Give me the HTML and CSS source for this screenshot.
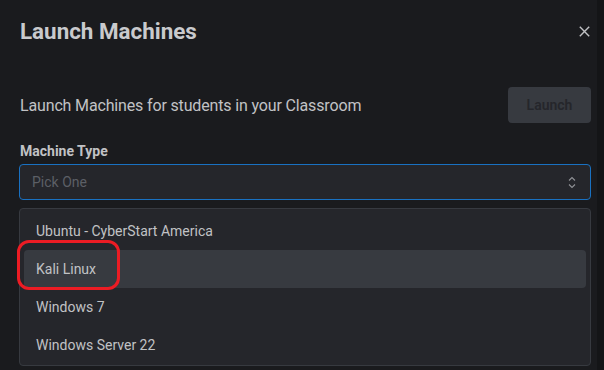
FILE: index.html
```html
<!DOCTYPE html>
<html>
<head>
<meta charset="utf-8">
<link rel="stylesheet" href="styles.css">
</head>
<body>
<div class="modal">
  <header class="modal-header">
    <h2 class="title">Launch Machines</h2>
    <button class="close" aria-label="Close">
      <svg width="11" height="11" viewBox="0 0 11 11"><path d="M0.8 0.8L10.2 10.2M10.2 0.8L0.8 10.2" stroke="#c1c2c5" stroke-width="1.4" fill="none"/></svg>
    </button>
  </header>
  <div class="row">
    <p class="desc">Launch Machines for students in your Classroom</p>
    <button class="launch" disabled>Launch</button>
  </div>
  <label class="label">Machine Type</label>
  <div class="select">
    <span class="placeholder">Pick One</span>
    <svg class="chev" width="8" height="13" viewBox="0 0 8 13"><polyline points="1,4.5 4,1.5 7,4.5" stroke="#909296" stroke-width="1.1" fill="none"/><polyline points="1,8.5 4,11.5 7,8.5" stroke="#909296" stroke-width="1.1" fill="none"/></svg>
  </div>
  <div class="dropdown">
    <div class="item">Ubuntu - CyberStart America</div>
    <div class="item hovered">Kali Linux<span class="annot"></span></div>
    <div class="item">Windows 7</div>
    <div class="item">Windows Server 22</div>
  </div>
</div>
</body>
</html>
```
FILE: styles.css
```css
html, body {
  margin: 0;
  padding: 0;
  background: #141517;
  height: 100%;
  overflow: hidden;
}
body {
  font-family: Roboto, "Liberation Sans", sans-serif;
  color: #c1c2c5;
}
.modal {
  width: 597px;
  height: 370px;
  box-sizing: border-box;
  background: #1a1b1e;
  padding: 16px 6px 0 19px;
}
.modal-header {
  display: flex;
  align-items: center;
  justify-content: space-between;
  height: 30px;
}
.title {
  margin: 0 0 0 1px;
  font-size: 22.4px;
  line-height: 30px;
  font-weight: 700;
  color: #c9cacd;
}
.close {
  background: none;
  border: 0;
  padding: 0;
  margin-right: 1px;
  width: 11px;
  height: 11px;
  display: flex;
}
.row {
  margin-top: 41px;
  display: flex;
  align-items: center;
  justify-content: space-between;
  height: 36px;
}
.desc {
  margin: 0 0 0 1px;
  font-size: 16px;
  letter-spacing: -0.15px;
  color: #c1c2c5;
}
.launch {
  width: 83px;
  height: 36px;
  border: 0;
  border-radius: 4px;
  background: #373a40;
  color: #25262b;
  font-family: inherit;
  font-size: 14px;
  font-weight: 600;
}
.label {
  display: block;
  margin-top: 18px;
  margin-left: 1px;
  font-size: 14px;
  line-height: 20px;
  font-weight: 700;
  color: #c1c2c5;
}
.select {
  margin-top: 3px;
  height: 36px;
  box-sizing: border-box;
  border: 1px solid #1971c2;
  border-radius: 4px;
  background: #25262b;
  display: flex;
  align-items: center;
  justify-content: space-between;
  padding: 0 14px 0 12px;
}
.placeholder {
  font-size: 14px;
  color: #5c5f66;
}
.dropdown {
  margin-top: 8px;
  box-sizing: border-box;
  border: 1px solid #373a40;
  border-radius: 4px;
  background: #25262b;
  padding: 3px 4px 1px;
}
.item {
  position: relative;
  height: 38px;
  display: flex;
  align-items: center;
  padding-left: 12px;
  font-size: 14px;
  color: #c1c2c5;
  border-radius: 4px;
}
.item.hovered {
  background: #373a40;
}
.annot {
  position: absolute;
  left: -7px;
  top: -10px;
  width: 103px;
  height: 50px;
  box-sizing: border-box;
  border: 3px solid #ec1c24;
  border-radius: 12px;
}
```
